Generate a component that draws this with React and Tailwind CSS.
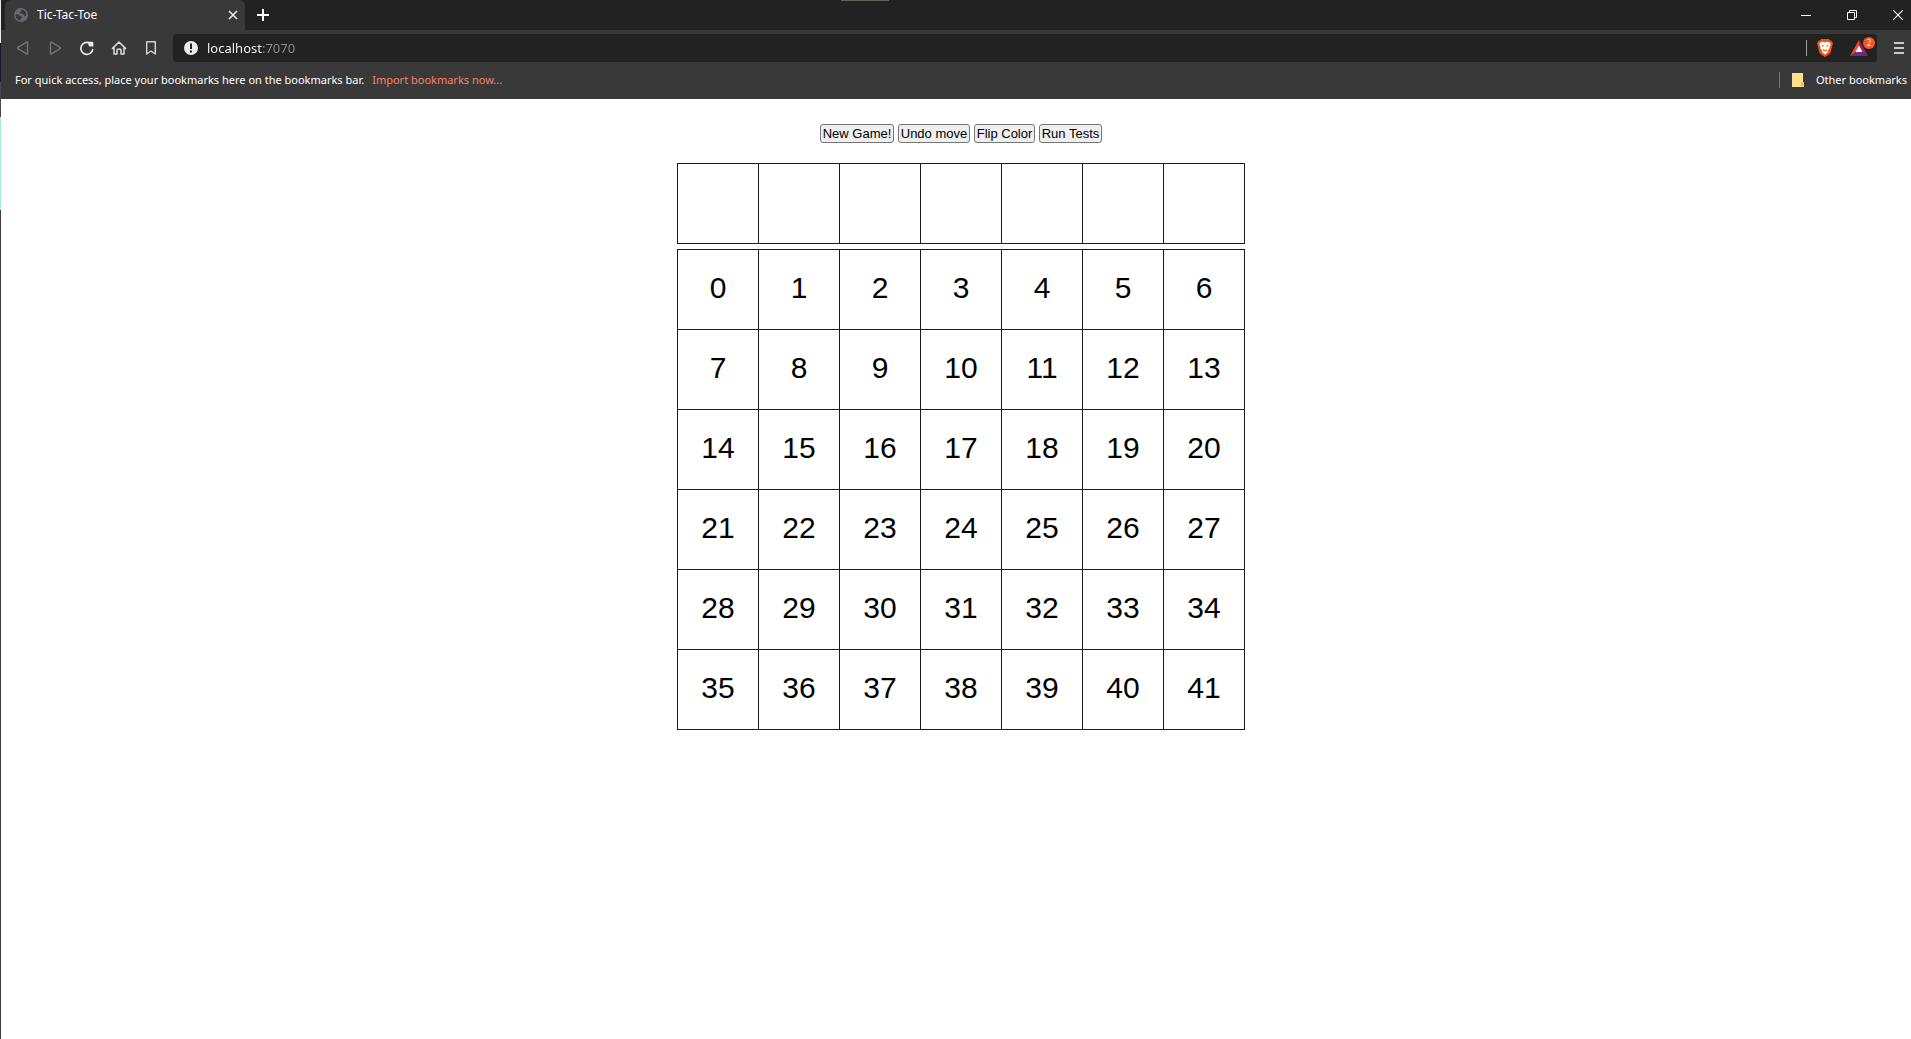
import React from 'react';

const reserve = Array.from({ length: 7 }, (_, i) => i);
const cells = Array.from({ length: 42 }, (_, i) => i);
const actions = [
  { label: 'New Game!', width: 'w-[74px]' },
  { label: 'Undo move', width: 'w-[72px]' },
  { label: 'Flip Color', width: 'w-[61px]' },
  { label: 'Run Tests', width: 'w-[63px]' },
];

function Globe() {
  return (
    <svg viewBox="0 0 14 14" className="size-3.5 shrink-0" aria-hidden="true">
      <circle cx="7" cy="7" r="7" fill="#666a6f" />
      <path d="M1.5 6.3 L4.5 6.5 L6 8 L8 8.5 L8 10 L6.5 11 L6.3 12.4 C3.5 12.2 1.5 9.8 1.5 6.3Z" fill="#393939" />
      <path d="M7.2 1.6 C10 1.6 12.3 4 12.3 6.8 L11 8.2 L9.8 7.4 L9.2 5.8 L7 5.6 L5.6 4.8 L6.8 3.6Z" fill="#393939" />
    </svg>
  );
}

function Triangle({ flip }) {
  return (
    <svg viewBox="0 0 14 16" className={flip ? 'h-4 w-3.5 rotate-180' : 'h-4 w-3.5'} aria-hidden="true">
      <path d="M10.5 2.2 Q11.5 1.6 11.5 2.8 V13.2 Q11.5 14.4 10.5 13.8 L2 8.7 Q1 8 2 7.3Z" fill="none" stroke="#747474" strokeWidth="1.4" />
    </svg>
  );
}

function Reload() {
  return (
    <svg viewBox="0 0 16 16" className="size-4" aria-hidden="true">
      <path d="M10.6 3 A6 6 0 1 0 13.8 9.2" fill="none" stroke="#ececec" strokeWidth="1.7" />
      <path d="M9.4 1.8 H13.2 Q14.4 1.8 14.4 3 V6.6 H11.4 Q9.4 6.6 9.4 4.6Z" fill="#ececec" />
    </svg>
  );
}

function Home() {
  return (
    <svg viewBox="0 0 16 16" className="size-4" aria-hidden="true">
      <path d="M1.5 8.4 L8 2 L14.5 8.4 M3 7.6 V14 H6 V10.6 Q6 9 8 9 Q10 9 10 10.6 V14 H13 V7.6" fill="none" stroke="#dedede" strokeWidth="1.5" strokeLinejoin="round" strokeLinecap="round" />
    </svg>
  );
}

function Bookmark() {
  return (
    <svg viewBox="0 0 16 16" className="size-4" aria-hidden="true">
      <path d="M3.7 1.7 H12.3 V14 L8 11 L3.7 14Z" fill="none" stroke="#cfcfcf" strokeWidth="1.5" strokeLinejoin="round" />
    </svg>
  );
}

function Info() {
  return (
    <svg viewBox="0 0 14 14" className="size-3.5" aria-hidden="true">
      <circle cx="7" cy="7" r="7" fill="#ececec" />
      <path d="M6 2.6 H8 V8 H6Z M6 9.4 H8 V11.4 H6Z" fill="#222" />
    </svg>
  );
}

function BraveLion() {
  return (
    <svg viewBox="0 0 16 18" className="h-[18px] w-4" aria-hidden="true">
      <path d="M4.3 0 H11.7 L13.2 1.6 L14.8 2 L16 4.6 L15.5 6 L13.8 13 Q13.4 14.4 12.2 15.3 L8 18 L3.8 15.3 Q2.6 14.4 2.2 13 L.5 6 L0 4.6 L1.2 2 L2.8 1.6Z" fill="#f4510b" />
      <path d="M8 3.2 L10.4 2.7 L12.8 3.5 L13.8 5.2 L12.4 8.4 L12.6 9.8 L10.4 12 L11 13 L8 15.6 L5 13 L5.6 12 L3.4 9.8 L3.6 8.4 L2.2 5.2 L3.2 3.5 L5.6 2.7Z" fill="#fff" />
      <path d="M4.4 6 L6.8 6.5 L6.6 7.6 L5.2 7.2Z M11.6 6 L9.2 6.5 L9.4 7.6 L10.8 7.2Z" fill="#f4510b" />
      <path d="M5.4 9.4 L7 10.9 L8 11.3 L9 10.9 L10.6 9.4 L9.6 11.9 L8 12.5 L6.4 11.9Z" fill="#f4510b" />
    </svg>
  );
}

function Rewards() {
  return (
    <svg viewBox="0 0 18 16" className="h-4 w-[18px]" aria-hidden="true">
      <path d="M9 0 L0 16 L6 12 L9 6Z" fill="#ff4724" />
      <path d="M9 0 V6 L12 12 L18 16Z" fill="#9e1f63" />
      <path d="M0 16 H18 L12 12 H6Z" fill="#662d91" />
      <path d="M9 5.6 L12.4 12 H5.6Z" fill="#fff" />
    </svg>
  );
}

function Board({ items, showNumbers }) {
  return (
    <div className="grid grid-cols-[repeat(7,81px)] border-t border-l border-[#1c1c1c]">
      {items.map((n) => (
        <div key={n} className="flex h-20 items-center justify-center border-r border-b border-[#1c1c1c] pb-1 text-[30px] leading-none">
          {showNumbers ? n : null}
        </div>
      ))}
    </div>
  );
}

export default function App() {
  return (
    <div className="flex min-h-screen bg-white font-['Liberation_Sans',Arial,sans-serif] text-black">
      <div className="flex w-px shrink-0 flex-col bg-[#3f3d4d]" aria-hidden="true">
        <div className="h-[43px] bg-[#e8e8e8]" />
        <div className="h-[39px] bg-[#1b1928]" />
        <div className="h-[35px] bg-[#484656]" />
        <div className="h-[93px] bg-[#a3ecd6]" />
      </div>

      <div className="flex min-w-0 grow flex-col">
        <header className="bg-[#393939] font-['Noto_Sans',sans-serif] text-[11px] text-white">
          <div className="relative flex h-[30px] items-end bg-[#222] pl-1">
            <div className="absolute top-0 left-[840px] h-px w-12 bg-[#65625c]" />
            <div className="flex h-full w-60 items-center rounded-t-md bg-[#393939] pr-1.5 pl-[9px]">
              <Globe />
              <span className="ml-[9px] grow text-xs leading-4">Tic-Tac-Toe</span>
              <button type="button" aria-label="Close tab" className="flex size-3 items-center justify-center">
                <svg viewBox="0 0 10 10" className="size-2.5"><path d="M1 1 L9 9 M9 1 L1 9" stroke="#e8e8e8" strokeWidth="1.6" /></svg>
              </button>
            </div>
            <button type="button" aria-label="New tab" className="flex h-full w-9 items-center justify-center">
              <svg viewBox="0 0 12 12" className="size-3"><path d="M6 0 V12 M0 6 H12" stroke="#fff" strokeWidth="2" /></svg>
            </button>
            <div className="ml-auto flex h-full items-center gap-9 pr-2">
              <button type="button" aria-label="Minimize" className="flex h-7 w-2.5 items-center">
                <svg viewBox="0 0 10 10" className="size-2.5"><path d="M0 5.5 H10" stroke="#fff" /></svg>
              </button>
              <button type="button" aria-label="Restore" className="flex h-7 w-2.5 items-center">
                <svg viewBox="0 0 10 10" className="size-2.5"><path d="M.5 2.5 H7.5 V9.5 H.5Z M2.5 2.5 V.5 H9.5 V7.5 H7.5" fill="none" stroke="#fff" /></svg>
              </button>
              <button type="button" aria-label="Close window" className="flex h-7 w-2.5 items-center">
                <svg viewBox="0 0 10 10" className="size-2.5"><path d="M0 0 L10 10 M10 0 L0 10" stroke="#fff" strokeWidth="1.1" /></svg>
              </button>
            </div>
          </div>

          <div className="flex items-center pt-1 pr-[7px] pl-1.5">
            <div className="flex">
              <button type="button" aria-label="Back" className="flex h-7 w-8 items-center justify-center"><Triangle /></button>
              <button type="button" aria-label="Forward" className="flex h-7 w-8 items-center justify-center"><Triangle flip /></button>
              <button type="button" aria-label="Reload" className="flex h-7 w-8 items-center justify-center"><Reload /></button>
              <button type="button" aria-label="Home" className="flex h-7 w-8 items-center justify-center"><Home /></button>
              <button type="button" aria-label="Bookmark this page" className="flex h-7 w-8 items-center justify-center"><Bookmark /></button>
            </div>
            <div className="ml-1.5 flex h-7 grow items-center rounded bg-[#222] pl-[11px]">
              <button type="button" aria-label="Site information"><Info /></button>
              <input
                type="text"
                aria-label="Address"
                defaultValue="localhost:7070"
                className="ml-[9px] h-6 min-w-0 grow bg-[linear-gradient(to_right,#fff_55px,#8e8e8e_55px)] bg-clip-text text-[13px] text-transparent outline-none"
              />
              <div className="h-4 w-px bg-[#a0a0a0]" />
              <button type="button" aria-label="Brave Shields" className="ml-2.5"><BraveLion /></button>
              <button type="button" aria-label="Brave Rewards" className="relative mr-[9px] ml-[17px]">
                <Rewards />
                <span className="absolute -top-[3px] left-[13px] flex size-3 items-center justify-center rounded-full bg-[#fb542b] text-[8px] leading-none">2</span>
              </button>
            </div>
            <button type="button" aria-label="Menu" className="ml-[17px] flex h-7 w-2.5 items-center">
              <svg viewBox="0 0 10 12" className="h-3 w-2.5"><path d="M0 1 H10 M0 6 H10 M0 11 H10" stroke="#c8c8c8" strokeWidth="2" /></svg>
            </button>
          </div>

          <div className="flex h-[37px] items-center pr-1 pb-0.5 pl-3.5 leading-4">
            <span>For quick access, place your bookmarks here on the bookmarks bar.</span>
            <a href="#import" className="ml-2 text-[#fb8168]">Import bookmarks now...</a>
            <div className="ml-auto h-4 w-px bg-[#777]" />
            <button type="button" className="ml-3 flex items-center">
              <svg viewBox="0 0 12 14" className="h-3.5 w-3" aria-hidden="true">
                <path d="M0 0 H11 V9 H12 V14 H0Z" fill="#ffe38c" />
                <path d="M9 13.5 V10 Q9 9 10 9 H11.5 V14" fill="#e6c14b" />
              </svg>
              <span className="ml-3">Other bookmarks</span>
            </button>
          </div>
        </header>

        <main className="flex flex-col items-center pt-[25px] pl-2.5">
          <div className="flex gap-1">
            {actions.map((a) => (
              <button
                key={a.label}
                type="button"
                className={`${a.width} h-[19px] rounded-[3px] border border-[#767676] bg-[#efefef] text-center text-[13px] leading-4 whitespace-nowrap`}
              >
                {a.label}
              </button>
            ))}
          </div>
          <div className="mt-5 flex flex-col gap-[5px]">
            <Board items={reserve} />
            <Board items={cells} showNumbers />
          </div>
        </main>
      </div>
    </div>
  );
}
